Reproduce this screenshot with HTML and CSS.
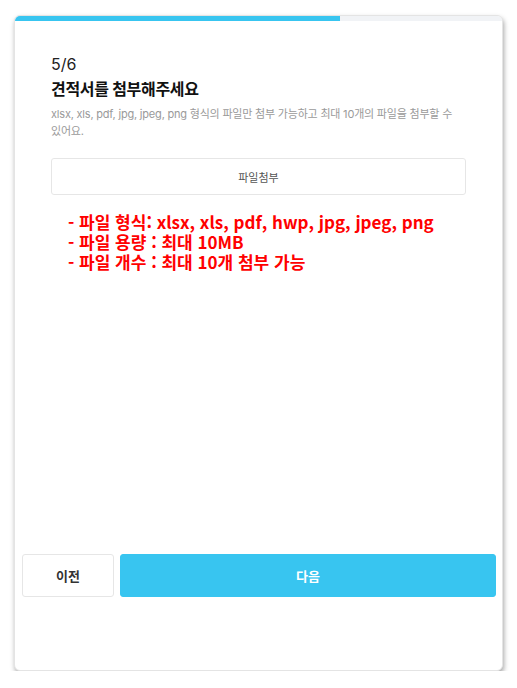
FILE: index.html
```html
<!DOCTYPE html>
<html lang="ko">
<head>
<meta charset="utf-8">
<link rel="stylesheet" href="styles.css">
</head>
<body>
<div class="card">
  <div class="progress"><div class="progress-fill"></div></div>
  <div class="content">
    <div class="step">5/6</div>
    <h1 class="title">견적서를 첨부해주세요</h1>
    <p class="desc">xlsx, xls, pdf, jpg, jpeg, png 형식의 파일만 첨부 가능하고 최대 10개의 파일을 첨부할 수 있어요.</p>
    <button class="attach">파일첨부</button>
    <ul class="notes">
      <li>- 파일 형식: xlsx, xls, pdf, hwp, jpg, jpeg, png</li>
      <li>- 파일 용량 : 최대 10MB</li>
      <li>- 파일 개수 : 최대 10개 첨부 가능</li>
    </ul>
  </div>
  <div class="footer">
    <button class="btn prev">이전</button>
    <button class="btn next">다음</button>
  </div>
</div>
</body>
</html>
```
FILE: styles.css
```css
* { box-sizing: border-box; }
html, body { margin: 0; padding: 0; background: #fff; }
body {
  font-family: "Inter", "Noto Sans CJK KR", sans-serif;
  padding: 15px 14px 0 14px;
}
.card {
  width: 489px;
  height: 656px;
  background: #fff;
  border: 1px solid #e4e4e4;
  border-radius: 6px;
  box-shadow: 1px 3px 5px rgba(0,0,0,0.35);
  display: flex;
  flex-direction: column;
  overflow: hidden;
}
.progress {
  height: 5px;
  background: #f1f3f6;
  flex: none;
}
.progress-fill {
  width: 325px;
  height: 100%;
  background: #38c5f0;
}
.content {
  padding: 32px 36px 0 36px;
  flex: 1;
}
.step {
  font-size: 16px;
  line-height: 22px;
  color: #222;
}
.title {
  margin: 2px 0 0 0;
  font-size: 16px;
  line-height: 24px;
  font-weight: 700;
  color: #111;
  letter-spacing: -0.3px;
}
.desc {
  margin: 5px 0 0 0;
  font-size: 11px;
  line-height: 17px;
  color: #9a9a9a;
  letter-spacing: -0.2px;
  word-break: keep-all;
}
.attach {
  display: block;
  width: 100%;
  height: 37px;
  margin-top: 18px;
  background: #fff;
  border: 1px solid #e6e6e6;
  border-radius: 3px;
  font-family: inherit;
  font-size: 11px;
  color: #555;
}
.notes {
  list-style: none;
  margin: 17px 0 0 0;
  padding: 0 0 0 17px;
  color: #ff0000;
  font-family: "Noto Sans CJK KR", sans-serif;
  font-size: 17px;
  font-weight: 700;
  line-height: 20px;
}
.footer {
  display: flex;
  gap: 6px;
  padding: 0 6px 73px 7px;
}
.btn {
  height: 43px;
  border-radius: 3px;
  font-family: inherit;
  font-size: 13px;
  font-weight: 700;
}
.prev {
  width: 92px;
  background: #fff;
  border: 1px solid #e6e6e6;
  color: #333;
}
.next {
  flex: 1;
  background: #38c5f0;
  border: 1px solid #38c5f0;
  color: #fff;
}
```
